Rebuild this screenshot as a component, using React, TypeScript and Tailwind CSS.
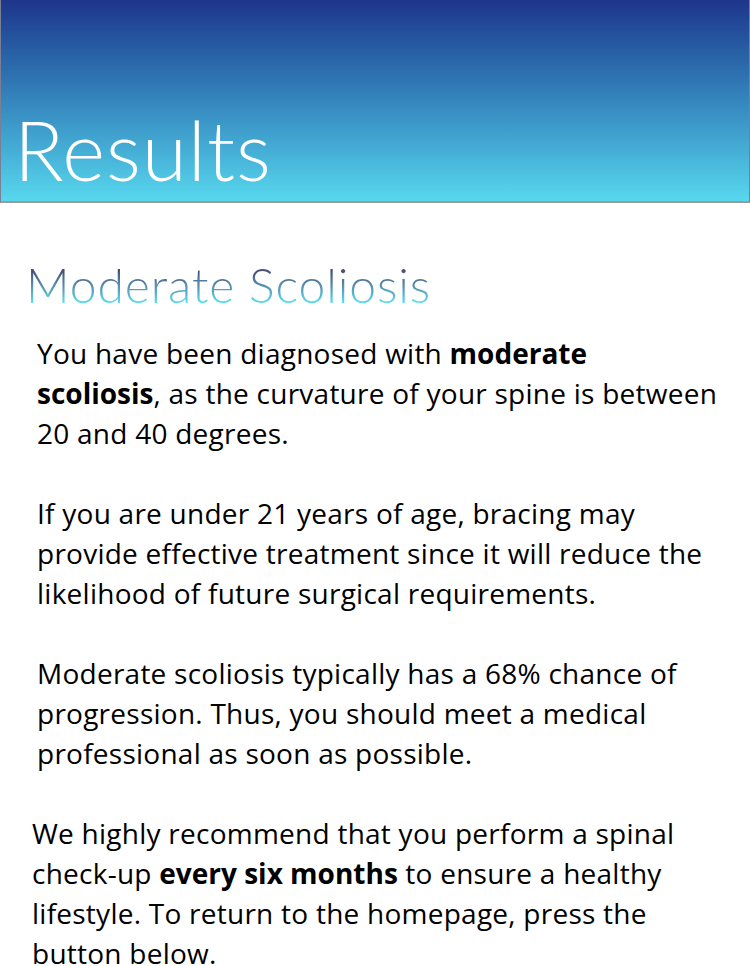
const heading = { fontFamily: "Lato, 'Noto Sans', sans-serif" };
const body = { fontFamily: "'Open Sans', 'Noto Sans', sans-serif" };

const Line = ({ children }: { children: React.ReactNode }) => (
  <span className="block whitespace-nowrap">{children}</span>
);

const App = () => {
  return (
    <div className="w-[750px] h-[966px] overflow-hidden bg-white">
      {/* Header */}
      <div className="h-[203px] border-x border-b-2 border-x-[#7a7f98] border-b-[#9a9a9a] bg-gradient-to-b from-[#1e358b] to-[#58d8ee] flex items-end px-[13px] pb-[4px]">
        <h1 className="text-white text-[82px] font-light leading-[96px] tracking-[1px]" style={heading}>
          Results
        </h1>
      </div>

      {/* Subtitle */}
      <h2
        className="mt-[52px] ml-[26px] text-[48px] font-light leading-[60px] tracking-[0.9px] bg-gradient-to-b from-[#464d74] from-25% to-[#58def2] to-80% bg-clip-text text-transparent w-fit"
        style={heading}
      >
        Moderate Scoliosis
      </h2>

      <div className="text-black text-[28px] leading-[40px] tracking-[0.25px]" style={body}>
        <div className="ml-[37px] mt-[18px]">
          <p>
            <Line>
              You have been diagnosed with <b className="tracking-normal">moderate</b>
            </Line>
            <Line>
              <b className="tracking-normal">scoliosis</b>, as the curvature of your spine is between
            </Line>
            <Line>20 and 40 degrees.</Line>
          </p>
          <p className="mt-[40px]">
            <Line>If you are under 21 years of age, bracing may</Line>
            <Line>provide effective treatment since it will reduce the</Line>
            <Line>likelihood of future surgical requirements.</Line>
          </p>
          <p className="mt-[40px]">
            <Line>Moderate scoliosis typically has a 68% chance of</Line>
            <Line>progression. Thus, you should meet a medical</Line>
            <Line>professional as soon as possible.</Line>
          </p>
        </div>
        <p className="ml-[32px] mt-[40px]">
          <Line>We highly recommend that you perform a spinal</Line>
          <Line>
            check-up <b className="tracking-normal">every six months</b> to ensure a healthy
          </Line>
          <Line>lifestyle. To return to the homepage, press the</Line>
          <Line>button below.</Line>
        </p>
      </div>
    </div>
  );
};

export default App;
